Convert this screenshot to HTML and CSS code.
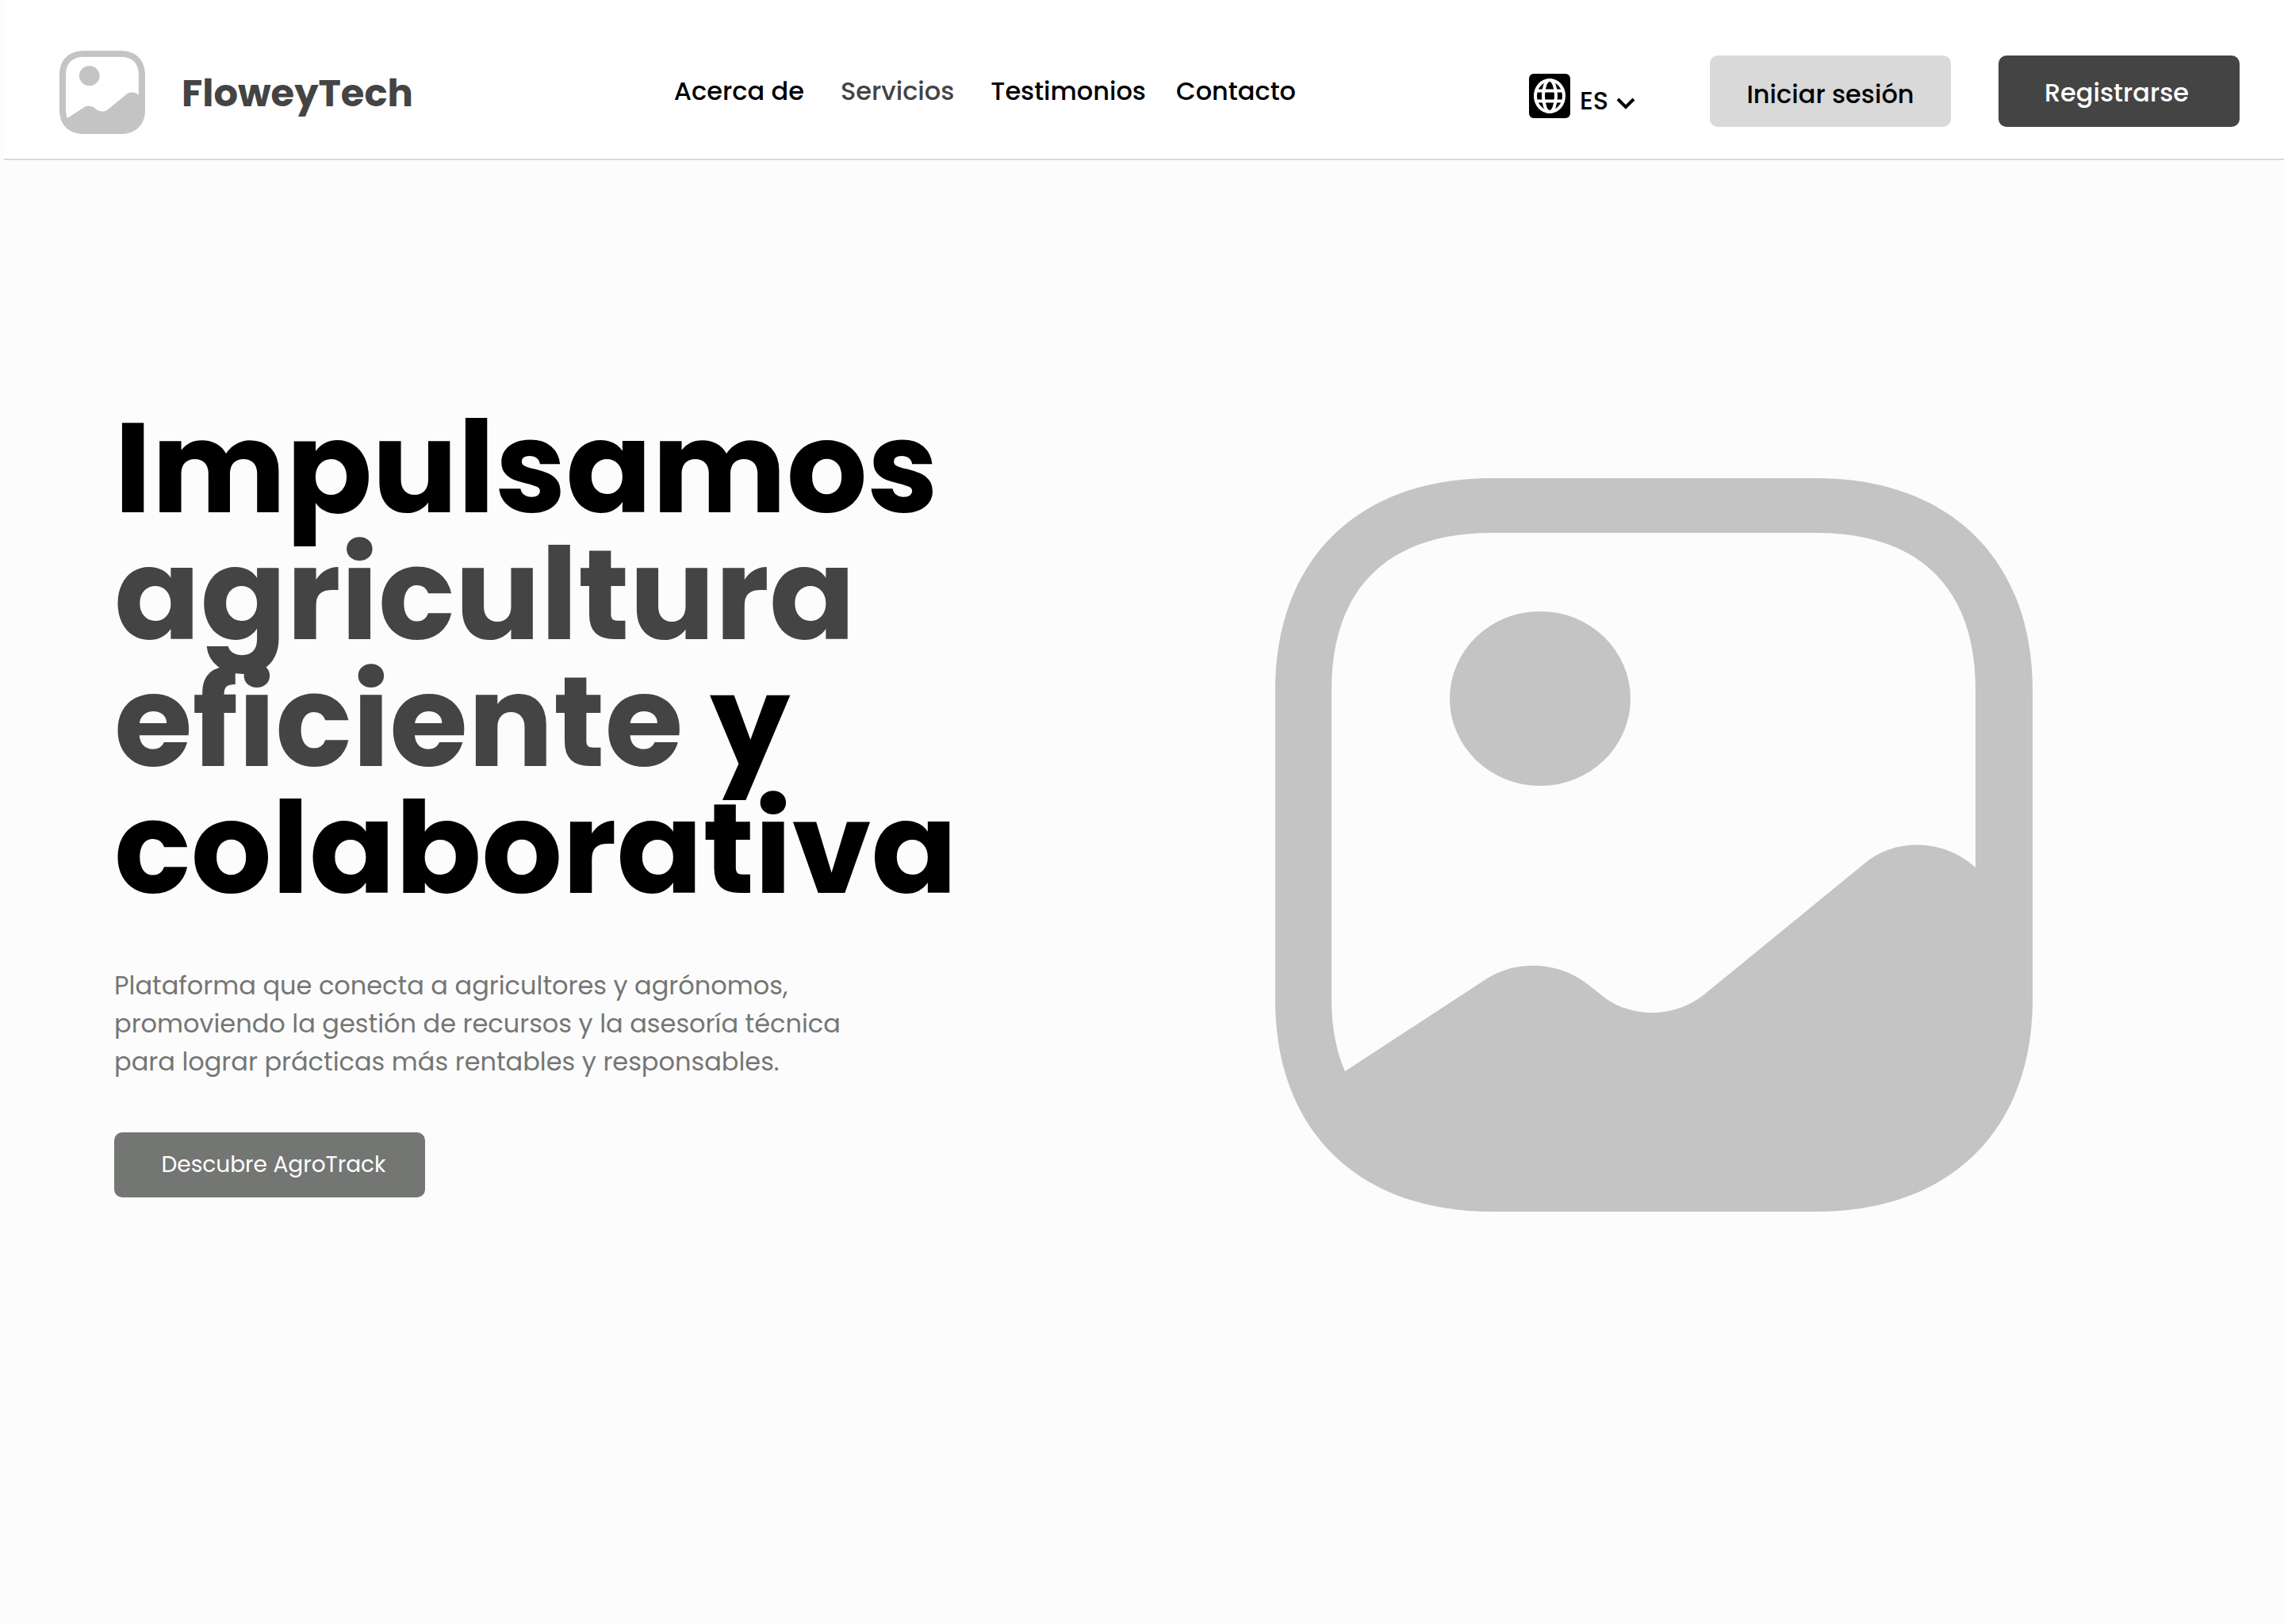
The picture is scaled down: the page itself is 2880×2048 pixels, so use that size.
FILE: index.html
```html
<!DOCTYPE html>
<html lang="es">
<head>
<meta charset="utf-8">
<meta name="viewport" content="width=device-width, initial-scale=1">
<title>FloweyTech</title>
<link rel="stylesheet" href="styles.css">
</head>
<body>
<header class="site-header">
  <a class="brand" href="#">
    <svg class="brand-logo" viewBox="0 0 955 925" preserveAspectRatio="none" aria-hidden="true">
      <use href="#picture"/>
    </svg>
    <span class="brand-name">FloweyTech</span>
  </a>
  <nav class="main-nav">
    <a href="#acerca">Acerca de</a>
    <a class="current" href="#servicios">Servicios</a>
    <a href="#testimonios">Testimonios</a>
    <a href="#contacto">Contacto</a>
  </nav>
  <div class="actions">
    <button class="language" type="button">
      <svg class="globe" viewBox="0 0 52 56" aria-hidden="true">
        <rect width="52" height="56" rx="6"/>
        <g fill="none" stroke="#fff" stroke-width="4">
          <ellipse cx="26" cy="28" rx="18" ry="20"/>
          <ellipse cx="26" cy="28" rx="8" ry="20"/>
          <path d="M9 21.500H43M9 34.500H43"/>
        </g>
      </svg>
      <span class="language-label">ES
        <svg class="chevron" viewBox="0 0 24 16" aria-hidden="true"><path d="M2 3L12 13L22 3"/></svg>
      </span>
    </button>
    <button class="button button-light" type="button">Iniciar sesión</button>
    <button class="button button-dark" type="button">Registrarse</button>
  </div>
</header>
<main class="hero">
  <section class="hero-copy">
    <h1>Impulsamos<br><span class="accent">agricultura<br>eficiente</span> y<br>colaborativa</h1>
    <p>Plataforma que conecta a agricultores y agrónomos,<br>promoviendo la gestión de recursos y la asesoría técnica<br>para lograr prácticas más rentables y responsables.</p>
    <button class="discover" type="button">Descubre AgroTrack</button>
  </section>
  <div class="hero-art">
    <svg class="hero-picture" viewBox="0 0 955 925" aria-hidden="true">
      <g id="picture" fill="#c4c4c4">
        <path fill-rule="evenodd" d="M273 0H682C852 0 955 104 955 267V658C955 821 852 925 682 925H273C103 925 0 821 0 658V267C0 104 103 0 273 0ZM273 69C142 69 71 139 71 267V658C71 692 77 723 88 748L267 631C303 608 355 609 391 636L409 650C446 682 503 682 541 651L743 486C780 454 843 454 883 491V267C883 139 813 69 682 69Z"/>
        <ellipse cx="334" cy="278" rx="114" ry="110"/>
      </g>
    </svg>
  </div>
</main>
</body>
</html>
```
FILE: styles.css
```css
* { box-sizing: border-box; }
body {
  margin: 0;
  background: #fcfcfc;
  color: #000;
  font-family: Poppins, Inter, sans-serif;
}
a { color: inherit; text-decoration: none; }
button { border: 0; font: inherit; cursor: pointer; }
.site-header {
  display: grid;
  grid-template-columns: 28% 1fr auto;
  column-gap: 5px;
  align-items: center;
  min-height: 202px;
  margin-left: 5px;
  padding: 30px 56px 0 70px;
  background: #fff;
  border-bottom: 2px solid #d9d9d9;
}
.brand { display: flex; align-items: center; gap: 46px; padding-top: 3px; }
.brand-logo { width: 108px; height: 105px; }
.brand-name { padding-top: 2px; color: #444; font-size: 48px; line-height: 72px; font-weight: 700; }
.main-nav { display: flex; gap: 46px; font-size: 32px; line-height: 48px; font-weight: 500; }
.main-nav .current { color: #444; }
.main-nav a:last-child { margin-left: -8px; }
.actions { display: flex; align-items: center; gap: 60px; font-size: 32px; line-height: 48px; font-weight: 500; }
.language {
  display: flex;
  align-items: flex-start;
  gap: 12px;
  margin-right: 34px;
  padding: 14px 0 0;
  background: none;
}
.globe { width: 52px; height: 56px; }
.language-label { display: flex; align-items: center; gap: 10px; padding-top: 10px; }
.chevron { width: 24px; height: 16px; margin-top: 6px; fill: none; stroke: #000; stroke-width: 4; }
.button { width: 304px; height: 90px; padding: 8px 0 0; border-radius: 10px; }
.button-light { background: #d9d9d9; }
.button-dark { padding: 4px 6px 0 0; background: #444; color: #fff; }
.hero {
  display: grid;
  grid-template-columns: 1464fr 1128fr;
  padding: 308px 144px 0;
}
h1 { margin: 0; font-size: 160px; line-height: 160px; font-weight: 700; }
.accent { color: #444; }
p { margin: 69px 0 0; color: #747674; font-size: 32px; line-height: 48px; }
.discover {
  width: 392px;
  height: 82px;
  margin-top: 65px;
  padding: 0 0 0 10px;
  border-radius: 10px;
  background: #747674;
  color: #fff;
  font-size: 28px;
}
.hero-art { padding-top: 93px; }
.hero-picture { display: block; width: 100%; max-width: 955px; }
```
